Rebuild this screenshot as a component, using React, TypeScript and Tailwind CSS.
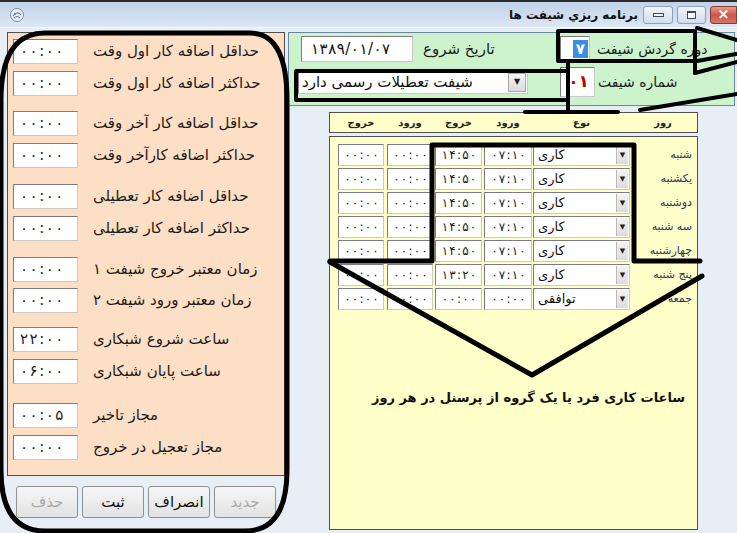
import React from "react";

const leftRows = [
  { label: "حداقل اضافه کار اول وقت", value: "۰۰:۰۰", mt: "mt-0" },
  { label: "حداکثر اضافه کار اول وقت", value: "۰۰:۰۰", mt: "mt-[7px]" },
  { label: "حداقل اضافه کار آخر وقت", value: "۰۰:۰۰", mt: "mt-[15px]" },
  { label: "حداکثر اضافه کارآخر وقت", value: "۰۰:۰۰", mt: "mt-[7px]" },
  { label: "حداقل اضافه کار تعطیلی", value: "۰۰:۰۰", mt: "mt-[16px]" },
  { label: "حداکثر اضافه کار تعطیلی", value: "۰۰:۰۰", mt: "mt-[7px]" },
  { label: "زمان معتبر خروج شیفت ۱", value: "۰۰:۰۰", mt: "mt-[16px]" },
  { label: "زمان معتبر ورود شیفت ۲", value: "۰۰:۰۰", mt: "mt-[6px]" },
  { label: "ساعت شروع شبکاری", value: "۲۲:۰۰", mt: "mt-[14px]" },
  { label: "ساعت پایان شبکاری", value: "۰۶:۰۰", mt: "mt-[7px]" },
  { label: "مجاز تاخیر", value: "۰۰:۰۵", mt: "mt-[19px]" },
  { label: "مجاز تعجیل در خروج", value: "۰۰:۰۰", mt: "mt-[7px]" },
];

const days = [
  { day: "شنبه", type: "کاری", a: "۰۷:۱۰", b: "۱۴:۵۰" },
  { day: "یکشنبه", type: "کاری", a: "۰۷:۱۰", b: "۱۴:۵۰" },
  { day: "دوشنبه", type: "کاری", a: "۰۷:۱۰", b: "۱۴:۵۰" },
  { day: "سه شنبه", type: "کاری", a: "۰۷:۱۰", b: "۱۴:۵۰" },
  { day: "چهارشنبه", type: "کاری", a: "۰۷:۱۰", b: "۱۴:۵۰" },
  { day: "پنج شنبه", type: "کاری", a: "۰۷:۱۰", b: "۱۳:۲۰" },
  { day: "جمعه", type: "توافقی", a: "۰۰:۰۰", b: "۰۰:۰۰" },
];

const sunken =
  "bg-white border border-t-[#7c7c7c] border-l-[#7c7c7c] border-r-[#c9c9c9] border-b-[#c9c9c9]";

function Spaced({ text, gap }: { text: string; gap: string }) {
  return (
    <span dir="ltr" className="inline-flex items-center">
      {Array.from(text).map((c, i) => (
        <span key={i} className={`inline-block ${gap}`}>
          {c}
        </span>
      ))}
    </span>
  );
}

function TitleBar() {
  return (
    <div className="h-[28px] flex items-center border-t-2 border-t-[#2b2b2b] border-b border-b-[#f3f6fa] bg-gradient-to-b from-[#c0d2e9] to-[#dce7f4]">
      <svg className="ml-[9px]" width="16" height="16" viewBox="0 0 16 16">
        <circle cx="8" cy="8" r="6.5" fill="#e9eef5" stroke="#7d8ca4" strokeWidth="1" />
        <path d="M4 9 Q8 3 12 8 M5 11 Q8 8 11 11" fill="none" stroke="#65769a" strokeWidth="1.1" />
        <circle cx="6" cy="7" r="1" fill="#65769a" />
      </svg>
      <div className="flex-1" />
      <span dir="rtl" className="text-[12px] font-bold text-[#111] whitespace-nowrap">
        برنامه ريزي شيفت ها
      </span>
      <div className="ml-[5px] w-[30px] h-[18px] rounded-[3px] border border-[#8ea0ba] bg-gradient-to-b from-[#f1f5fb] to-[#d2ddec] flex items-center justify-center">
        <div className="w-[11px] h-[4px] border border-[#3d4a5c] bg-white" />
      </div>
      <div className="ml-[4px] w-[29px] h-[18px] rounded-[3px] border border-[#8ea0ba] bg-gradient-to-b from-[#f1f5fb] to-[#d2ddec] flex items-center justify-center">
        <div className="w-[9px] h-[8px] border border-[#3d4a5c] border-t-2 bg-white" />
      </div>
      <div className="ml-[4px] w-[27px] h-[18px] rounded-l-[3px] border border-[#8b3a30] bg-gradient-to-b from-[#e29b90] via-[#c9564a] to-[#d97668] flex items-center justify-center">
        <span className="text-white font-bold text-[13px] leading-none font-['Liberation_Sans',sans-serif]">✕</span>
      </div>
    </div>
  );
}

function LeftColumn() {
  return (
    <div className="ml-[7px] w-[278px] flex flex-col">
      <div className="h-[444px] bg-[#fddfc5] border border-[#4f4f4f] pt-[6px]">
        {leftRows.map((r, i) => (
          <div key={i} className={`flex items-center h-[25px] ${r.mt}`}>
            <div
              className={`ml-[5px] w-[65px] h-[25px] ${sunken} flex items-center pl-[6px] text-[15px] text-[#222]`}
            >
              <Spaced text={r.value} gap="mr-[1.5px]" />
            </div>
            <span dir="rtl" className="ml-[15px] text-[15px] text-[#1c1c1c] whitespace-nowrap">
              {r.label}
            </span>
          </div>
        ))}
      </div>
      <div className="mt-[10px] flex pl-[9px] gap-[4px]">
        {[
          { t: "حذف", d: true },
          { t: "ثبت", d: false },
          { t: "انصراف", d: false },
          { t: "جدید", d: true },
        ].map((b, i) => (
          <div
            key={i}
            dir="rtl"
            className={`w-[62px] h-[32px] rounded-[3px] border border-[#909090] bg-gradient-to-b from-[#f6f6f6] to-[#e2e2e2] flex items-center justify-center text-[15px] ${
              b.d ? "text-[#a8a8a8]" : "text-[#111]"
            }`}
          >
            {b.t}
          </div>
        ))}
      </div>
    </div>
  );
}

function TimeCell({ v, w }: { v: string; w: string }) {
  return (
    <div className={`${w} h-[22px] ${sunken} flex items-center justify-center pl-[1px] text-[12px] text-[#222]`}>
      <Spaced text={v} gap="mx-[0.6px]" />
    </div>
  );
}

function RightColumn() {
  return (
    <div className="ml-[3px] w-[447px] flex flex-col">
      <div className="h-[74px] bg-[#cdf3cd] border border-[#6e86a6]">
        <div className="flex items-center h-[26px] mt-[3px]">
          <div className={`ml-[12px] w-[112px] h-[26px] ${sunken} flex items-center pl-[9px] text-[15px] text-[#111]`}>
            <Spaced text="۱۳۸۹/۰۱/۰۷" gap="mr-[0.5px]" />
          </div>
          <div className="ml-[10px] w-[137px]">
            <span dir="rtl" className="text-[15px] text-[#1c1c1c] whitespace-nowrap">
              تاریخ شروع
            </span>
          </div>
          <div className={`w-[30px] h-[26px] ${sunken} flex items-center justify-end pr-[1px]`}>
            <span className="bg-[#3a8ee6] text-white text-[15px] font-bold leading-[18px] px-[3px]">۷</span>
          </div>
          <span dir="rtl" className="ml-[7px] text-[14px] text-[#1c1c1c] whitespace-nowrap">
            دوره گردش شیفت
          </span>
        </div>
        <div className="flex items-center h-[30px] mt-[5px]">
          <div className={`ml-[9px] w-[230px] h-[23px] ${sunken} flex items-center`}>
            <span dir="rtl" className="flex-1 pl-[3px] text-[15px] text-[#111] whitespace-nowrap text-left">
              شیفت تعطیلات رسمی دارد
            </span>
            <div className="w-[18px] h-[19px] mr-[1px] bg-gradient-to-b from-[#f4f4f4] to-[#dcdcdc] border border-[#a8a8a8] flex items-center justify-center text-[8px] text-[#222]">
              ▼
            </div>
          </div>
          <div className="w-[32px]" />
          <div className={`w-[35px] h-[30px] ${sunken} flex items-center justify-end pr-[5px]`}>
            <span dir="ltr" className="text-[17px] font-bold text-[#c40000]">۰۱</span>
          </div>
          <span dir="rtl" className="ml-[3px] text-[14px] text-[#1c1c1c] whitespace-nowrap">
            شماره شیفت
          </span>
        </div>
      </div>

      <div className="ml-[41px] w-[369px] mt-[6px] h-[21px] bg-[#ffffc9] border border-[#505050] flex items-center pl-[8px] text-[10px] font-bold text-[#222]">
        <div className="w-[46px] text-center">خروج</div>
        <div className="ml-[3px] w-[46px] text-center">ورود</div>
        <div className="ml-[2px] w-[47px] text-center">خروج</div>
        <div className="ml-[2px] w-[48px] text-center">ورود</div>
        <div className="ml-[1px] w-[97px] text-center">نوع</div>
        <div className="ml-[4px] w-[58px] text-center">روز</div>
      </div>

      <div className="ml-[41px] w-[369px] mt-[3px] h-[394px] bg-[#ffffc9] border border-[#505050] pt-[7px] pl-[8px] flex flex-col gap-[2px]">
        {days.map((d, i) => (
          <div key={i} className="flex items-center h-[22px]">
            <TimeCell v="۰۰:۰۰" w="w-[46px]" />
            <div className="ml-[3px]">
              <TimeCell v="۰۰:۰۰" w="w-[46px]" />
            </div>
            <div className="ml-[2px]">
              <TimeCell v={d.b} w="w-[47px]" />
            </div>
            <div className="ml-[2px]">
              <TimeCell v={d.a} w="w-[48px]" />
            </div>
            <div className={`ml-[1px] w-[97px] h-[22px] ${sunken} flex items-center`}>
              <span dir="rtl" className="flex-1 pl-[4px] text-[13px] text-[#111] text-left">
                {d.type}
              </span>
              <div className="w-[12px] h-[18px] mr-[1px] bg-gradient-to-b from-[#f4f4f4] to-[#dcdcdc] border-l border-[#b8b8b8] flex items-center justify-center text-[7px] text-[#222]">
                ▼
              </div>
            </div>
            <div dir="rtl" className="ml-[4px] w-[58px] text-[11px] text-[#24385e] whitespace-nowrap">
              {d.day}
            </div>
          </div>
        ))}
        <div className="mt-[76px] flex justify-center pl-[22px]">
          <span dir="rtl" className="text-[13px] font-bold text-[#111] whitespace-nowrap">
            ساعات کاری فرد یا یک گروه از پرسنل در هر روز
          </span>
        </div>
      </div>
    </div>
  );
}

function Annotations() {
  return (
    <svg className="absolute inset-0 pointer-events-none" width="737" height="533" viewBox="0 0 737 533">
      <g fill="none" stroke="#000" strokeLinejoin="round" strokeLinecap="round">
        <path
          d="M45 33 L250 33 Q287 33 287 100 L287 470 Q287 531 245 531 L45 531 Q1 531 1 470 L1 100 Q1 33 45 33 Z"
          strokeWidth="5"
        />
        <path d="M695 73 L695 31 L558 31 L558 61 L697 61 L736 54" strokeWidth="4" />
        <path d="M697 28 L737 40" strokeWidth="4" />
        <path d="M695 73 L737 62" strokeWidth="4" />
        <path d="M640 110 L737 94" strokeWidth="4" />
        <path d="M568 62 L568 112 M296 71 L568 71 M296 100 L568 100 M296 71 L296 100" strokeWidth="4" />
        <path d="M525 112 L618 112" strokeWidth="4" />
        <path d="M330 261 L432 261 L432 145 L634 145 L634 261 L700 261" strokeWidth="5" />
        <path d="M330 262 L532 375 L702 276" strokeWidth="5" />
      </g>
    </svg>
  );
}

export default function App() {
  return (
    <div className="relative w-[737px] h-[533px] overflow-hidden bg-[#e7eef6] font-['DejaVu_Sans',sans-serif] text-black">
      <TitleBar />
      <div className="flex pt-[4px]">
        <LeftColumn />
        <RightColumn />
      </div>
      <Annotations />
    </div>
  );
}
